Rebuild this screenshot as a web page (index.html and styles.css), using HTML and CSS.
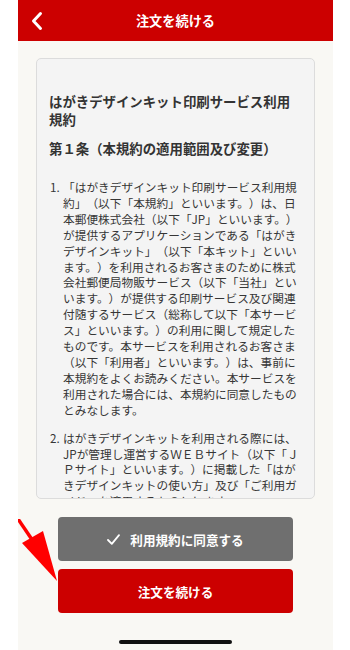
FILE: index.html
```html
<!DOCTYPE html>
<html lang="ja">
<head>
<meta charset="utf-8">
<title>注文を続ける</title>
<link rel="stylesheet" href="styles.css">
</head>
<body>
<div class="phone">
  <header class="header">
    <span class="back">
      <svg width="14" height="20" viewBox="0 0 14 20"><path d="M10.5 2.5 L3.5 10 L10.5 17.5" fill="none" stroke="#fff" stroke-width="3" stroke-linecap="round" stroke-linejoin="round"/></svg>
    </span>
    <h1 class="header-title">注文を続ける</h1>
    <span class="spacer"></span>
  </header>
  <main class="content">
    <section class="card">
      <h2 class="terms-title">はがきデザインキット印刷サービス利用規約</h2>
      <h3 class="terms-heading">第１条（本規約の適用範囲及び変更）</h3>
      <ol class="terms-list">
        <li class="item"><span class="num">1.</span><p class="txt">「はがきデザインキット印刷サービス利用規約」（以下「本規約」といいます。）は、日本郵便株式会社（以下「JP」といいます。）が提供するアプリケーションである「はがきデザインキット」（以下「本キット」といいます。）を利用されるお客さまのために株式会社郵便局物販サービス（以下「当社」といいます。）が提供する印刷サービス及び関連付随するサービス（総称して以下「本サービス」といいます。）の利用に関して規定したものです。本サービスを利用されるお客さま（以下「利用者」といいます。）は、事前に本規約をよくお読みください。本サービスを利用された場合には、本規約に同意したものとみなします。</p></li>
        <li class="item"><span class="num">2.</span><p class="txt">はがきデザインキットを利用される際には、JPが管理し運営するＷＥＢサイト（以下「ＪＰサイト」といいます。）に掲載した「はがきデザインキットの使い方」及び「ご利用ガイド」を適用するものとします。</p></li>
      </ol>
    </section>
    <div class="actions">
      <button class="btn btn-agree">
        <svg class="check" width="13" height="11" viewBox="0 0 13 11"><path d="M1 6 L4.8 9.8 L12 1.2" fill="none" stroke="#fff" stroke-width="1.8" stroke-linecap="round" stroke-linejoin="round"/></svg>
        <span>利用規約に同意する</span>
      </button>
      <button class="btn btn-continue">注文を続ける</button>
    </div>
    <div class="home-bar"></div>
  </main>
</div>
<svg class="arrow" width="60" height="90" viewBox="0 0 60 90">
  <line x1="0" y1="0" x2="17" y2="25" stroke="#ff0000" stroke-width="3.5"/>
  <polygon points="4,24 25,12 39,62" fill="#ff0000"/>
</svg>
</body>
</html>
```

FILE: styles.css
```css
html, body {
  margin: 0;
  padding: 0;
  background: #ffffff;
}
body {
  position: relative;
  width: 350px;
  height: 650px;
  overflow: hidden;
  font-family: "Noto Sans CJK JP", "Noto Sans", sans-serif;
  text-spacing-trim: space-all;
}
.phone {
  width: 315px;
  height: 650px;
  margin-left: 18px;
  background: #f9f8f4;
  display: flex;
  flex-direction: column;
}
.header {
  height: 41px;
  flex: none;
  background: #cc0000;
  display: grid;
  grid-template-columns: 40px 1fr 40px;
  align-items: center;
}
.back {
  display: flex;
  align-items: center;
  padding-left: 12px;
  height: 41px;
}
.header-title {
  margin: 0;
  text-align: center;
  color: #fff;
  font-size: 13.2px;
  font-weight: 700;
  line-height: 41px;
}
.content {
  flex: 1;
  display: flex;
  flex-direction: column;
  padding: 17px 18px 0;
}
.card {
  height: 441px;
  box-sizing: border-box;
  border: 1px solid #dcdcdc;
  border-radius: 5px;
  background: #f4f4f4;
  overflow: hidden;
  padding: 33px 14px 0 12px;
  color: #333;
}
.terms-title {
  margin: 0;
  font-size: 13.4px;
  line-height: 18px;
  font-weight: 700;
  color: #333;
}
.terms-heading {
  margin: 11px 0 0;
  font-size: 13.4px;
  line-height: 18px;
  font-weight: 700;
  color: #333;
}
.terms-list {
  list-style: none;
  margin: 22px 0 0;
  padding: 0;
}
.item {
  display: flex;
  margin-bottom: 12px;
}
.num {
  flex: none;
  width: 14px;
  padding-left: 1px;
  box-sizing: border-box;
  font-size: 11.7px;
  line-height: 15.9px;
  color: #363636;
}
.txt {
  margin: 0;
  flex: 1;
  font-size: 11.7px;
  line-height: 15.9px;
  color: #363636;
  line-break: strict;
  text-spacing-trim: space-all;
}
.actions {
  display: flex;
  flex-direction: column;
  align-items: center;
  gap: 8px;
  margin-top: 18px;
}
.btn {
  width: 235px;
  height: 44px;
  border: none;
  border-radius: 4px;
  color: #fff;
  font-family: inherit;
  font-size: 12.6px;
  font-weight: 700;
  display: flex;
  align-items: center;
  justify-content: center;
  gap: 10px;
  padding: 0;
}
.btn-agree {
  background: #6f6f6f;
}
.btn-continue {
  background: #cc0000;
}
.home-bar {
  width: 113px;
  height: 4px;
  border-radius: 2px;
  background: #111;
  margin: 27px auto 0;
}
.arrow {
  position: absolute;
  left: 18px;
  top: 519px;
}
```
